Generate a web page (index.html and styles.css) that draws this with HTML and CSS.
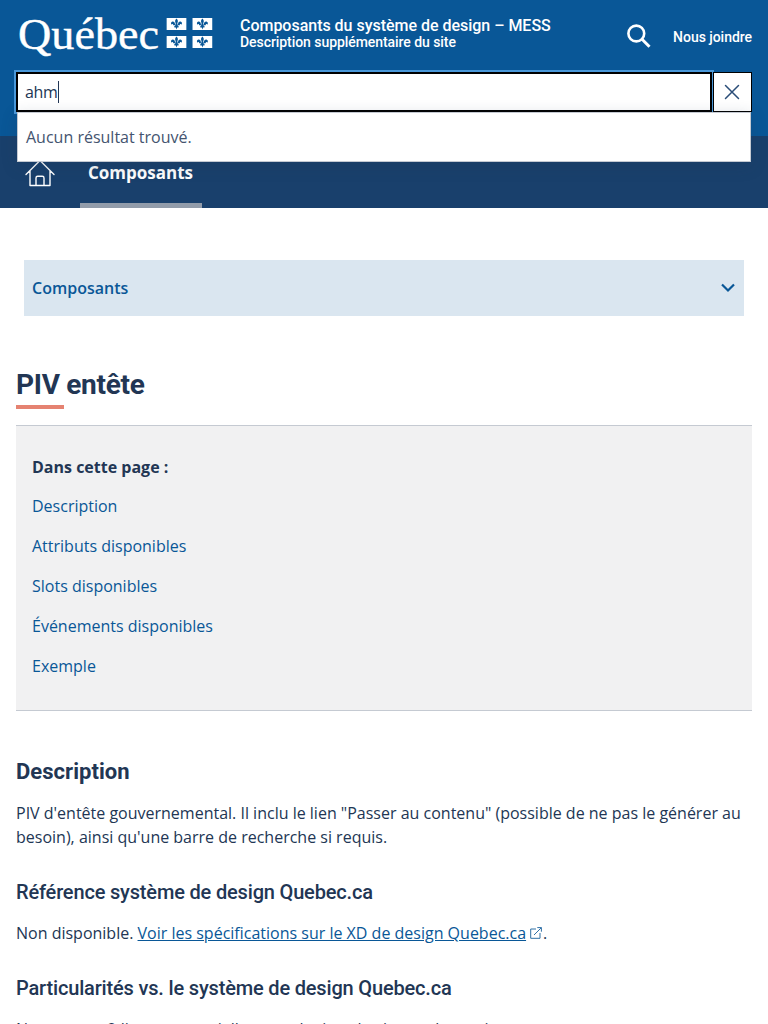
FILE: index.html
```html
<!DOCTYPE html>
<html lang="fr">
<head>
<meta charset="utf-8">
<title>PIV entête</title>
<link rel="stylesheet" href="styles.css">
</head>
<body>
<svg width="0" height="0" class="defs" aria-hidden="true">
  <symbol id="fleur" viewBox="0 0 20 12">
    <path fill="#fff" d="M0 0h20v12H0z"/>
    <path fill="#095797" d="M10 .6C11.3 2 11.8 3.3 11 4.8L10.700 6.500H11.500C11.500 4.500 12.500 3.300 14 3.500C15.500 3.700 16 5.500 14.900 6.700C14.700 5.900 13.900 5.700 13.500 6.300L13.200 7.300H11.200C11.200 8.300 12 8.700 12.500 8.400C12.300 9.500 11.300 9.600 10.800 9.200L10 11.400L9.200 9.200C8.700 9.600 7.700 9.500 7.500 8.400C8 8.700 8.800 8.300 8.800 7.300H6.800L6.500 6.300C6.100 5.700 5.300 5.900 5.100 6.700C4 5.500 4.500 3.700 6 3.500C7.500 3.300 8.500 4.500 8.500 6.500H9.300L9 4.800C8.200 3.300 8.700 2 10 .6Z"/>
  </symbol>
</svg>
<header class="piv">
  <div class="piv-top">
    <svg class="logo" width="200" height="48" viewBox="0 0 200 48" role="img" aria-label="Québec">
      <text class="logo-word" x="2" y="36.500" textLength="141" lengthAdjust="spacingAndGlyphs">Québec</text>
      <use href="#fleur" x="150.300" y="6" width="20.400" height="12"/>
      <use href="#fleur" x="176.200" y="6" width="20.400" height="12"/>
      <use href="#fleur" x="150.300" y="24" width="20.400" height="12"/>
      <use href="#fleur" x="176.200" y="24" width="20.400" height="12"/>
    </svg>
    <div class="site">
      <div class="site-title">Composants du système de design – MESS</div>
      <div class="site-desc">Description supplémentaire du site</div>
    </div>
    <svg class="loupe" width="24" height="24" viewBox="0 0 24 24" fill="none" stroke="#fff"><circle cx="9.300" cy="9.500" r="7.900" stroke-width="2.600"/><path d="M14.800 15l7.700 7.700" stroke-width="3"/></svg>
    <a class="join">Nous joindre</a>
  </div>
  <div class="search">
    <div class="field"><span class="typed">ahm</span></div>
    <button class="clear" aria-label="Effacer"><svg width="16" height="16" viewBox="0 0 16 16" stroke="#2a4d78" stroke-width="1.500" stroke-linecap="round"><path d="M1.500 1.500l13 13M14.500 1.500l-13 13"/></svg></button>
    <div class="results">Aucun résultat trouvé.</div>
  </div>
</header>
<nav class="menu">
  <svg class="home" width="30" height="28" viewBox="0 0 30 28" fill="none" stroke="#fff" stroke-width="1.400" stroke-linecap="round" stroke-linejoin="round"><path d="M1 15.500L15 1.500l14 14M5 11.700V26.500h20V11.700M11 26.500v-7.500q0-1.700 1.700-1.700h4.600q1.700 0 1.700 1.700v7.500"/></svg>
  <a class="menu-item">Composants</a>
</nav>
<div class="side">
  <span>Composants</span>
  <svg width="16" height="10" viewBox="0 0 16 10" fill="none" stroke="#095797" stroke-width="2.200"><path d="M2 1.500l6 6 6-6"/></svg>
</div>
<main>
  <h1>PIV entête</h1>
  <div class="toc">
    <strong>Dans cette page :</strong>
    <a>Description</a>
    <a>Attributs disponibles</a>
    <a>Slots disponibles</a>
    <a>Événements disponibles</a>
    <a>Exemple</a>
  </div>
  <h2>Description</h2>
  <p>PIV d'entête gouvernemental. Il inclu le lien "Passer au contenu" (possible de ne pas le générer au besoin), ainsi qu'une barre de recherche si requis.</p>
  <h3>Référence système de design Quebec.ca</h3>
  <p>Non disponible. <a class="link">Voir les spécifications sur le XD de design Quebec.ca</a><svg class="ext" width="12" height="12" viewBox="0 0 12 12" fill="none" stroke="#2f70a6"><path d="M6 2H.7v9.300H10V6M7.300.6h4.100v4.100M11.300.7L4 8"/></svg>.</p>
  <h3>Particularités vs. le système de design Quebec.ca</h3>
  <p>Nous avons 2 lignes potentielles pour le titre du site ou du service.</p>
</main>
</body>
</html>
```
FILE: styles.css
```css
* { box-sizing: border-box; }
html { height: 1024px; overflow: hidden; }
body { margin: 0; height: 1024px; overflow: hidden; background: #fff; color: #223654; font: 16px/24px "Open Sans", sans-serif; }
.defs { position: absolute; }
.piv { height: 136px; background: #095797; color: #fff; font-family: Roboto, sans-serif; }
.piv-top { height: 72px; padding: 12px 16px 0; display: flex; align-items: flex-start; }
.logo { flex: none; overflow: visible; }
.logo-word { font-family: "Liberation Serif", serif; font-size: 43.500px; fill: #fff; stroke: #fff; stroke-width: .4px; }
.site { margin: 5px 0 0 24px; font-weight: 500; }
.site-title { font-size: 16px; line-height: 18px; letter-spacing: -.02px; }
.site-desc { font-size: 14px; line-height: 15px; letter-spacing: -.06px; }
.loupe { margin: 12px 22px 0 auto; }
.join { margin-top: 13px; font-size: 14px; line-height: 24px; font-weight: 500; letter-spacing: -.04px; }
.search { position: relative; margin: 0 16px; height: 40px; display: flex; gap: 1px; font-family: "Open Sans", sans-serif; color: #223654; }
.field { flex: 1; border: 2px solid #000; background: #fff; box-shadow: 0 0 0 2px #4a98d9; padding: 7px; line-height: 22px; }
.typed { display: inline-block; border-right: 1px solid #223654; letter-spacing: -.3px; }
.clear { width: 39px; border: 1px solid #000; background: #fff; padding: 0 2px 0 0; display: flex; align-items: center; justify-content: center; }
.results { position: absolute; left: 1px; top: 40px; width: 734px; height: 50px; background: #fff; border: 1px solid #c5cad2; padding: 12px 8px; color: #44546f; box-shadow: 0 4px 16px rgba(34, 54, 84, .24); z-index: 2; }
.menu { height: 72px; background: #19406c; color: #fff; display: flex; padding-left: 25px; }
.home { margin-top: 23px; }
.menu-item { margin-left: 25px; width: 122px; padding: 25px 8px 0; font-size: 17px; font-weight: 700; border-bottom: 5px solid #929caa; }
.side { margin: 52px 24px 0; height: 56px; background: #dae6f0; color: #095797; font-weight: 600; display: flex; align-items: center; justify-content: space-between; padding: 0 8px; }
main { padding: 51px 16px 0; }
h1, h2, h3 { font-family: Roboto, sans-serif; margin: 0; color: #223654; }
h1 { font-size: 28px; line-height: 36px; font-weight: 700; letter-spacing: -.3px; padding-bottom: 7px; }
h1::after { content: ""; display: block; width: 48px; height: 4px; margin-top: 2px; background: #e58271; }
.toc { margin-top: 9px; height: 286px; background: #f1f1f2; border: solid #c5cad2; border-width: 1px 0; padding: 29px 16px; display: flex; flex-direction: column; }
.toc strong { font-weight: 700; margin-bottom: 15px; }
.toc a { color: #095797; margin-bottom: 16px; }
h2 { font-size: 22px; line-height: 28px; font-weight: 700; letter-spacing: .03px; margin-top: 47px; }
p { margin: 16px 0 0; }
h2 + p { margin-top: 15px; }
h3 { font-size: 20px; line-height: 24px; font-weight: 500; letter-spacing: -.17px; margin-top: 31px; }
h3 + p { margin-top: 17px; }
.link { color: #095797; text-decoration: underline; }
.ext { margin: 0 1px 0 4px; }
```
